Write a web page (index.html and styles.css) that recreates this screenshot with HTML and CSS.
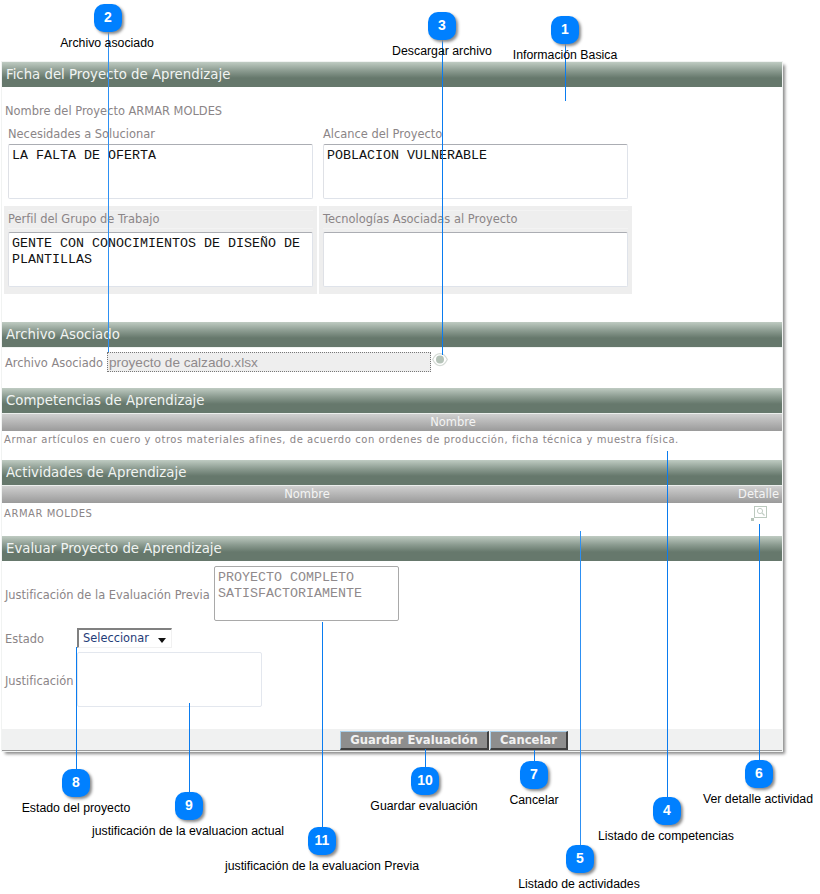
FILE: index.html
```html
<!DOCTYPE html>
<html lang="es">
<head>
<meta charset="utf-8">
<title>Ficha del Proyecto de Aprendizaje</title>
<link rel="stylesheet" href="styles.css">
</head>
<body>
<main class="panel">
  <h2 class="bar">Ficha del Proyecto de Aprendizaje</h2>
  <section class="body body-ficha">
    <p class="name">Nombre del Proyecto ARMAR MOLDES</p>
    <div class="grid">
      <div class="cell">
        <div class="lab">Necesidades a Solucionar</div>
        <div class="ta">LA FALTA DE OFERTA</div>
      </div>
      <div class="cell">
        <div class="lab">Alcance del Proyecto</div>
        <div class="ta">POBLACION VULNERABLE</div>
      </div>
      <div class="cell alt">
        <div class="lab">Perfil del Grupo de Trabajo</div>
        <div class="ta">GENTE CON CONOCIMIENTOS DE DISEÑO DE PLANTILLAS</div>
      </div>
      <div class="cell alt">
        <div class="lab">Tecnologías Asociadas al Proyecto</div>
        <div class="ta"></div>
      </div>
    </div>
  </section>

  <h2 class="bar">Archivo Asociado</h2>
  <section class="body body-file">
    <span class="flabel">Archivo Asociado</span>
    <span class="file">proyecto de calzado.xlsx</span>
    <svg class="eye" width="16" height="14" viewBox="0 0 16 14" aria-hidden="true">
      <path d="M0.7 6.5C3 1.8 5.4 0.7 8 0.7s5 1.1 7.3 5.8C13 11.2 10.6 12.6 8 12.6S3 11.2 0.7 6.5Z" fill="#fff" stroke="#d5dbd6" stroke-width="1.2"/>
      <circle cx="8" cy="6.5" r="4" fill="#b5c3b8"/>
    </svg>
  </section>

  <h2 class="bar">Competencias de Aprendizaje</h2>
  <div class="thead"><span class="th-full">Nombre</span></div>
  <section class="body body-comp">
    <p class="row-text">Armar artículos en cuero y otros materiales afines, de acuerdo con ordenes de producción, ficha técnica y muestra física.</p>
  </section>

  <h2 class="bar">Actividades de Aprendizaje</h2>
  <div class="thead"><span class="th-name">Nombre</span><span class="th-detail">Detalle</span></div>
  <section class="body body-act">
    <p class="row-text upper">ARMAR MOLDES</p>
    <svg class="detail" width="17" height="16" viewBox="0 0 17 16" aria-hidden="true">
      <rect x="4.5" y="0.5" width="12" height="11" fill="#fff" stroke="#bccabf"/>
      <circle cx="10" cy="5" r="2.6" fill="none" stroke="#c2cec5"/>
      <path d="M12 7l2.5 2.5" stroke="#c2cec5" stroke-width="1.2"/>
      <rect x="1" y="12" width="3" height="3" fill="#b5c3b8"/>
    </svg>
  </section>

  <h2 class="bar">Evaluar Proyecto de Aprendizaje</h2>
  <section class="body body-eval">
    <div class="frow frow-prev">
      <span class="flabel wide">Justificación de la Evaluación Previa</span>
      <div class="ta ta-prev">PROYECTO COMPLETO SATISFACTORIAMENTE</div>
    </div>
    <div class="frow frow-state">
      <span class="flabel narrow">Estado</span>
      <div class="select">Seleccionar<span class="arrow"></span></div>
    </div>
    <div class="frow frow-just">
      <span class="flabel narrow">Justificación</span>
      <div class="ta ta-just"></div>
    </div>
  </section>
  <footer class="actions">
    <button class="btn btn-save" type="button">Guardar Evaluación</button>
    <button class="btn btn-cancel" type="button">Cancelar</button>
  </footer>
</main>

<div class="callouts">
  <i class="line l1"></i><i class="line l2"></i><i class="line l3"></i><i class="line l4"></i>
  <i class="line l5"></i><i class="line l6"></i><i class="line l7"></i><i class="line l8"></i>
  <i class="line l9"></i><i class="line l10"></i><i class="line l11"></i>

  <b class="bubble b1">1</b><span class="note n1">Información Basica</span>
  <b class="bubble b2">2</b><span class="note n2">Archivo asociado</span>
  <b class="bubble b3">3</b><span class="note n3">Descargar archivo</span>
  <b class="bubble b4">4</b><span class="note n4">Listado de competencias</span>
  <b class="bubble b5">5</b><span class="note n5">Listado de actividades</span>
  <b class="bubble b6">6</b><span class="note n6">Ver detalle actividad</span>
  <b class="bubble b7">7</b><span class="note n7">Cancelar</span>
  <b class="bubble b8">8</b><span class="note n8">Estado del proyecto</span>
  <b class="bubble b9">9</b><span class="note n9">justificación de la evaluacion actual</span>
  <b class="bubble b10">10</b><span class="note n10">Guardar evaluación</span>
  <b class="bubble b11">11</b><span class="note n11">justificación de la evaluacion Previa</span>
</div>
</body>
</html>
```
FILE: styles.css
```css
html, body { margin: 0; padding: 0; background: #fff; }
body { position: relative; width: 820px; height: 894px; overflow: hidden; font-family: "DejaVu Sans", sans-serif; }
p, h2 { margin: 0; }

.panel { box-sizing: border-box; width: 780px; margin: 62px 0 0 2px; background: #fff; box-shadow: 3px 3px 3px #8a8a8a; outline: 1px solid #f1f3f2; }

.bar { box-sizing: border-box; height: 25px; padding-left: 4px; font-size: 13.3px; font-weight: 400; line-height: 25px; color: #f1f4f2; background: linear-gradient(#bfcbc2 0, #8a9a8f 9px, #66786c 16px, #66786c 100%); }

.body { box-sizing: border-box; overflow: hidden; background: #fff; color: #8b8587; font-size: 11.45px; }
.body-ficha { height: 235px; padding: 16px 0 0 2px; }
.name { padding-left: 1px; line-height: 16px; color: #8b8587; }
.grid { display: grid; grid-template-columns: 313px 313px; column-gap: 2px; margin-top: -1px; }
.cell { box-sizing: border-box; height: 88px; padding: 7px 4px 0; }
.lab { height: 16px; margin-bottom: 3px; line-height: 18px; }
.alt { padding-top: 4px; background: #eee; }
.alt .lab { height: 17px; margin-bottom: 3px; line-height: 17px; border-top: 1px solid #f3f3f3; border-bottom: 1px solid #f3f3f3; }
.ta { box-sizing: border-box; width: 305px; height: 55px; padding: 3px 3px; font-family: "Liberation Mono", monospace; font-size: 13.33px; line-height: 16px; color: #111; background: #fff; border: 1px solid #dfe3ea; border-top-color: #abadb3; border-left-color: #dfe1e6; border-radius: 2px; }

.body-file { display: flex; align-items: flex-start; height: 41px; padding: 4px 0 0 3px; border-top: 1px solid #f0f3f1; }
.flabel { flex: none; line-height: 20px; color: #8b8587; }
.body-file .flabel { padding-top: 1px; }
.body-eval .flabel { padding-top: 2px; }
.file { box-sizing: border-box; width: 324px; height: 20px; margin-left: 4px; padding-left: 1px; font-family: "Liberation Sans", Arial, sans-serif; font-size: 13.6px; line-height: 20px; color: #8f8a8c; background: #eee; border: 1px dotted #777; }
.eye { margin: 1px 0 0 1px; }

.thead { box-sizing: border-box; display: flex; height: 18px; font-size: 11.5px; line-height: 17px; color: #f4f4f4; background: linear-gradient(#cfcfcf, #9a9a9a); border-top: 1px solid #ecefed; }
.th-full { flex: 1; margin-left: 122px; text-align: center; }
.th-name { width: 610px; text-align: center; }
.th-detail { flex: 1; padding-right: 3px; text-align: right; }

.body-comp { height: 29px; padding: 1px 0 0 2px; }
.row-text { font-size: 10px; letter-spacing: .55px; line-height: 16px; color: #8b8587; white-space: nowrap; }
.upper { padding-top: 3px; }
.body-act { display: flex; justify-content: space-between; height: 33px; padding: 0 15px 0 2px; }
.detail { margin-top: 3px; }

.body-eval { height: 168px; padding: 5px 0 0 3px; }
.frow { display: flex; }
.frow-prev { align-items: center; height: 55px; }
.wide { width: 209px; }
.narrow { width: 72px; }
.ta-prev { width: 185px; color: #8f8a8c; border-color: #a9a9a9; }
.ta-just { width: 185px; background: #fff; border-color: #e3e7ee; }
.frow-state { align-items: center; height: 20px; margin-top: 7px; }
.frow-just { align-items: center; height: 55px; margin-top: 4px; }
.select { position: relative; box-sizing: border-box; width: 95px; height: 20px; padding-left: 4px; font-size: 11.4px; line-height: 17px; color: #1f3c78; background: #fff; border-top: 2px solid #808080; border-left: 2px solid #808080; border-right: 1px solid #f1f1f1; border-bottom: 1px solid #f1f1f1; }
.arrow { position: absolute; top: 8px; right: 5px; width: 0; height: 0; border: 4px solid transparent; border-top: 5px solid #111; border-bottom: 0; }

.actions { box-sizing: border-box; display: flex; gap: 1px; height: 22px; padding: 2px 0 1px 338px; background: #f0f1f1; border-bottom: 1px solid #9a9a9a; }
.btn { box-sizing: border-box; height: 19px; padding: 1px 0 0; font-family: "DejaVu Sans", sans-serif; font-size: 11.6px; font-weight: 700; line-height: 15px; color: #f2f2f2; background: #8e8e8e; border: 1px solid; border-width: 1px 2px 2px 1px; border-color: #a9cfea #3f3f3f #3f3f3f #a9cfea; }
.btn-save { width: 149px; }
.btn-cancel { width: 78px; }

.callouts { position: absolute; inset: 0; pointer-events: none; }
.line { position: absolute; width: 1px; background: #0a7cf0; }
.l1 { left: 565px; top: 44px; height: 57px; }
.l2 { left: 108px; top: 32px; height: 320px; background: #2d90f3; }
.l3 { left: 442px; top: 40px; height: 315px; }
.l4 { left: 667px; top: 451px; height: 346px; }
.l5 { left: 580px; top: 531px; height: 314px; background: #2d90f3; }
.l6 { left: 759px; top: 524px; height: 236px; }
.l7 { left: 534px; top: 750px; height: 11px; }
.l8 { left: 76px; top: 647px; height: 122px; }
.l9 { left: 189px; top: 703px; height: 89px; }
.l10 { left: 425px; top: 749px; height: 18px; }
.l11 { left: 322px; top: 622px; height: 205px; }

.bubble { position: absolute; width: 28px; height: 28px; font-family: "Liberation Sans", Arial, sans-serif; font-size: 14px; font-weight: 700; line-height: 27px; text-align: center; color: #fff; background: #0080ff; border-radius: 10px; box-shadow: 2px 2px 3px #8b8b8b; }
.b1 { left: 551px; top: 16px; }
.b2 { left: 94px; top: 4px; }
.b3 { left: 428px; top: 12px; }
.b4 { left: 653px; top: 797px; }
.b5 { left: 566px; top: 845px; }
.b6 { left: 745px; top: 760px; }
.b7 { left: 520px; top: 761px; }
.b8 { left: 62px; top: 769px; }
.b9 { left: 175px; top: 792px; }
.b10 { left: 411px; top: 767px; }
.b11 { left: 308px; top: 827px; }

.note { position: absolute; font-family: "Liberation Sans", Arial, sans-serif; font-size: 12.3px; line-height: 14px; color: #000; white-space: nowrap; transform: translateX(-50%); }
.n1 { left: 565px; top: 48px; }
.n2 { left: 107px; top: 36px; }
.n3 { left: 442px; top: 44px; }
.n4 { left: 666px; top: 829px; }
.n5 { left: 579px; top: 877px; }
.n6 { left: 758px; top: 792px; }
.n7 { left: 534px; top: 793px; }
.n8 { left: 76px; top: 801px; }
.n9 { left: 188px; top: 824px; }
.n10 { left: 424px; top: 799px; }
.n11 { left: 322px; top: 859px; }
```
